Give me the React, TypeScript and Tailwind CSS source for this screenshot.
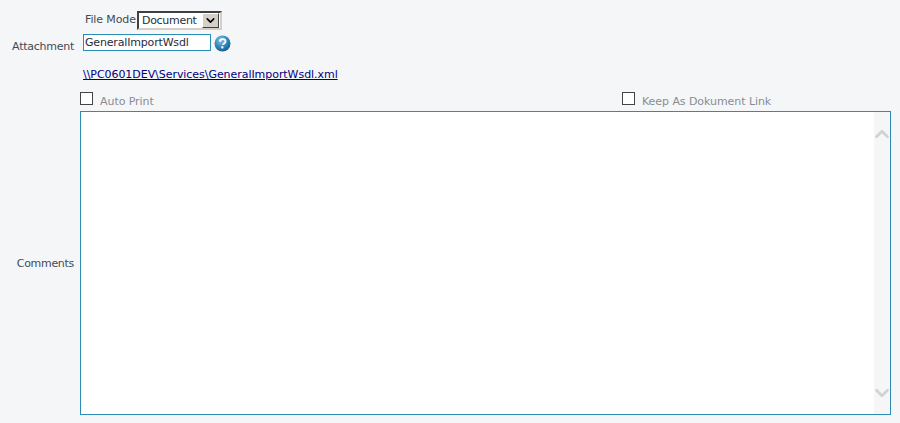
import { ChevronDown, ChevronUp } from "lucide-react";

const font = "font-['DejaVu_Sans',sans-serif] text-[11px] tracking-[-0.06px]";

function HelpIcon() {
  return (
    <svg width="17" height="17" viewBox="0 0 17 17" className="ml-[3px] mt-[1px] shrink-0">
      <defs>
        <radialGradient id="help" cx="0.4" cy="0.3" r="0.8">
          <stop offset="0" stopColor="#8fc4e4" />
          <stop offset="0.55" stopColor="#2f84ba" />
          <stop offset="1" stopColor="#14507f" />
        </radialGradient>
      </defs>
      <circle cx="8.5" cy="8.5" r="8" fill="url(#help)" />
      <path d="M5.8 6.6c.2-1.7 1.4-2.5 2.9-2.5 1.7 0 2.8 1 2.8 2.3 0 1.1-.6 1.6-1.4 2.1-.7.5-1 .8-1 1.6" fill="none" stroke="#fff" strokeWidth="1.8" />
      <rect x="7.2" y="11.3" width="2.2" height="2.1" fill="#fff" />
    </svg>
  );
}

export default function App() {
  return (
    <div className={`h-[423px] w-[900px] overflow-hidden bg-[#f5f6f8] text-[#3f4b57] ${font}`}>
      <div className="flex pt-[11px]">
        <div className="w-[83px] shrink-0" />
        <div className="flex h-[19px] items-center">
          <span className="ml-[2px] w-[52px] whitespace-nowrap tracking-[-0.12px]">File Mode</span>
          <div className="flex h-[19px] w-[85px] items-center border-2 border-b-[#d4d0c8] border-l-[#404040] border-r-[#d4d0c8] border-t-[#404040] bg-white">
            <span className="flex-1 pl-[3px] pt-[1px] tracking-[-0.3px] text-[#1f2d3a]">Document</span>
            <span className="mr-[1px] flex h-[15px] w-[17px] items-center justify-center border border-b-[#404040] border-l-white border-r-[#404040] border-t-white bg-[#d4d0c8]">
              <ChevronDown size={13} strokeWidth={3} className="text-black" />
            </span>
          </div>
        </div>
      </div>

      <div className="mt-[4px] flex">
        <div className="w-[74px] shrink-0 pt-[5px] text-right tracking-[-0.26px]">Attachment</div>
        <div className="ml-[9px] flex items-start">
          <div className="flex h-[17px] w-[128px] items-center border border-[#2b8cb5] bg-white pl-[1px] pt-[1px] tracking-[-0.17px] text-[#1f2d3a]">GeneralImportWsdl</div>
          <HelpIcon />
        </div>
      </div>

      <div className="ml-[83px] mt-[11px] h-[16px]">
        <a href="#" className="tracking-[-0.05px] text-[#000080] underline">\\PC0601DEV\Services\GeneralImportWsdl.xml</a>
      </div>

      <div className="ml-[80px] mt-[8px] flex h-[22px] items-start pt-[1px] text-[#888d92]">
        <div className="flex w-[542px] items-start">
          <span className="h-[13px] w-[13px] border border-[#444] bg-white" />
          <span className="ml-[7px] mt-[2px]">Auto Print</span>
        </div>
        <div className="flex items-start">
          <span className="h-[13px] w-[13px] border border-[#444] bg-white" />
          <span className="ml-[7px] mt-[2px]">Keep As Dokument Link</span>
        </div>
      </div>

      <div className="-mt-[2px] flex">
        <div className="flex w-[74px] shrink-0 items-center justify-end pt-[3px] tracking-[-0.3px]">Comments</div>
        <div className="ml-[6px] flex h-[304px] w-[811px] justify-end border border-[#2b8cb5] bg-white">
          <div className="flex w-[16px] flex-col items-center justify-between bg-[#f6f6f7] pb-[10px] pt-[11px] text-[#d2d2d2]">
            <ChevronUp size={22} strokeWidth={3} />
            <ChevronDown size={22} strokeWidth={3} />
          </div>
        </div>
      </div>
    </div>
  );
}
